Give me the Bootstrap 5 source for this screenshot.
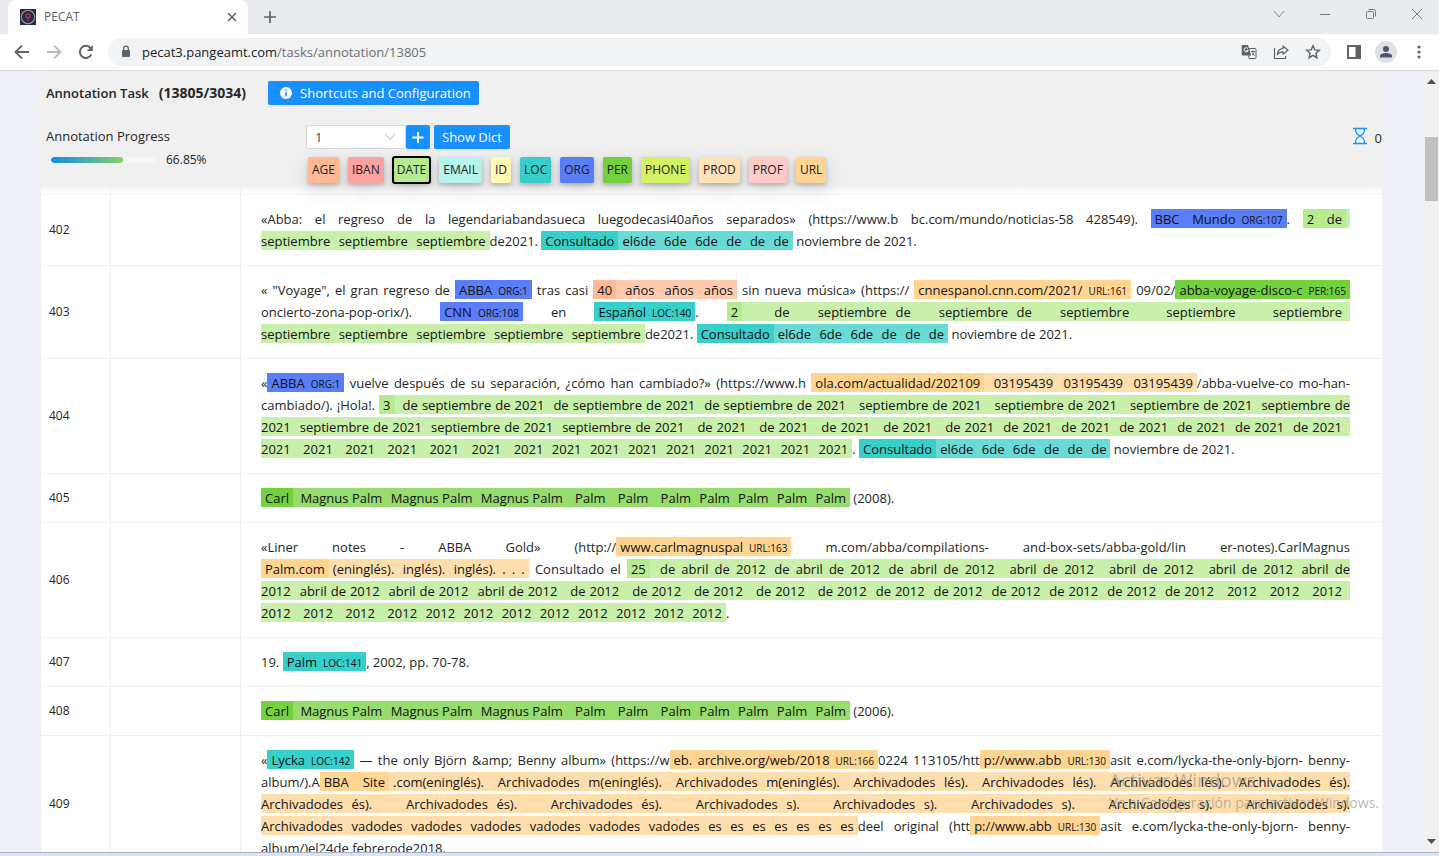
<!DOCTYPE html>
<html lang="es">
<head>
<meta charset="utf-8">
<meta name="viewport" content="width=device-width, initial-scale=1">
<title>PECAT</title>
<link href="https://cdn.jsdelivr.net/npm/bootstrap@5.3.0/dist/css/bootstrap.min.css" rel="stylesheet">
<script src="https://cdn.jsdelivr.net/npm/bootstrap@5.3.0/dist/js/bootstrap.bundle.min.js"></script>
<style>
  body { font: 13px/22px "Open Sans", "Noto Sans", sans-serif; color: #262626; background: #eff1f6; }
  svg { display: block; flex: none; }
  button { font: inherit; }
  .icon-btn { border: 0; background: none; padding: 0; color: #5f6368; }

  /* browser frame */
  .tab-strip { height: 34px; background: #e8eaed; }
  .tab-item { width: 240px; margin-left: 8px; background: #fff; border-radius: 8px 8px 0 0; padding: 0 10px 0 12px; font-size: 12px; color: #5f6368; }
  .window-btns { gap: 34px; padding: 0 16px 6px 0; }
  .tool-row { height: 37px; background: #fff; border-bottom: 1px solid #dadce0; padding: 0 12px 0 14px; }
  .url-pill { height: 28px; border-radius: 14px; background: #f1f3f4; padding: 0 10px 0 12px; margin-left: 14px; }
  .url-text { color: #6b6f73; text-decoration: none; margin-left: 10px; }
  .url-text strong { font-weight: 400; color: #202124; }
  .avatar { width: 22px; height: 22px; background: #dee1e6; margin-left: 14px; }
  .menu-btn { margin-left: 14px; }

  /* page area */
  .page-area { padding: 0 42px 0 41px; }
  .task-head { background: #f0f0f0; box-shadow: 0 0 6px #f0f0f0; padding: 10px 0 3px 5px; z-index: 2; }
  .head-title { font-size: 13px; font-weight: 600; height: 24px; }
  .head-count { font-size: 14px; font-weight: 700; margin: 0 22px 0 10px; }
  .blue-btn { background: #1890ff; border: 0; border-radius: 2px; color: #fff; height: 24px; padding: 0 8px; line-height: 22px; box-shadow: 0 2px 0 #00000008; font-weight: 500; white-space: nowrap; }
  .progress-col { width: 260px; }
  .bar-row { padding-top: 2px; }
  .bar-track { width: 107px; height: 6px; border-radius: 3px; background: #f5f5f5; margin-left: 5px; }
  .bar-track .progress-bar { border-radius: 3px; background: linear-gradient(90deg, #108ee9, #87d068); }
  .pct { font-size: 12px; }
  .dict-select { width: 100px; height: 24px; border: 1px solid #d9d9d9; border-radius: 2px; background: #fff; appearance: none; padding: 0 8px; color: #444; font: inherit; line-height: 20px; }
  .select-chevron { position: absolute; right: 10px; top: 8px; pointer-events: none; }
  .tag-row { padding-left: 2px; gap: 9px; }
  .tag-btn { border: 0; border-radius: 2px; height: 26px; padding: 0 4px; font-size: 12px; line-height: 26px; color: #222; box-shadow: 0 2px 4px #0003, 0 6px 20px #00000024; }
  .tag-btn.active { outline: 2px solid #000; outline-offset: -1px; }
  .timer { padding-top: 2px; }

  /* segments table */
  .seg-table { table-layout: fixed; width: 100%; background: #fff; border-collapse: separate; border-spacing: 0; }
  .seg-table td { padding: 13px 32px 13px 20px; border-bottom: 1px solid #f0f0f0; vertical-align: middle; }
  .seg-table td:nth-child(-n+2) { border-right: 1px solid #f0f0f0; padding: 0 8px; font-size: 12px; font-weight: 500; }
  .seg-table .spacer-row td { height: 9px; padding: 0; background: linear-gradient(#f5f5f5, #fff); }
  .seg-line { display: block; white-space: nowrap; height: 22px; }
  .seg-line.full { text-align: justify; text-align-last: justify; }
  .ent { padding: 1px 4px 0; color: #111; }
  .ent small { font-size: 10px; line-height: 12px; font-weight: 500; margin-left: 6px; }
  .flush { padding-right: 0; }
  .cont { padding-left: 0; }
  .wide-end { padding-right: 8px; }
  .pad-gap { padding-left: 5px; }
  .pad-gap-2 { padding-left: 9px; }
  .fix-gap { padding-left: 2px; }
  .k-age { background: #ffba95; } .k-age-l { background: #ffcbb0; }
  .k-iban { background: #ffa39e; }
  .k-date { background: #b7eb8f; } .k-date-l { background: #c9f0ab; }
  .k-email { background: #b5f5ec; }
  .k-id { background: #fffbb5; }
  .k-loc { background: #36cfc9; } .k-loc-l { background: #68dbd6; }
  .k-org { background: #597ef7; }
  .k-per { background: #73d13d; } .k-per-l { background: #96dd6e; }
  .k-phone { background: #d3f261; }
  .k-prod { background: #ffe2b5; }
  .k-prof { background: #ffccc7; }
  .k-url { background: #ffd591; } .k-url-l { background: #ffdead; }

  .scroll-rail { width: 15px; background: #f1f1f1; }
  .scroll-thumb { width: 13px; height: 64px; background: #c1c1c1; margin-top: 53px; }
  .watermark { position: absolute; right: 60px; bottom: 38px; color: #8c8c8c99; pointer-events: none; z-index: 3; line-height: 24px; white-space: nowrap; }
  .watermark div:first-child { font-size: 19px; }
  .watermark div:last-child { font-size: 14px; line-height: 22px; }
  .task-edge { height: 4px; background: #d9e2f7; border-top: 1px solid #a9b2c0; }
</style>
</head>
<body class="vh-100 d-flex flex-column overflow-hidden">

<header class="flex-shrink-0">
  <div class="tab-strip d-flex">
    <div class="tab-item d-flex align-items-center">
      <svg width="16" height="16" viewBox="0 0 16 16"><rect width="16" height="16" fill="#222a46"/><circle cx="8" cy="8" r="6.7" fill="none" stroke="#a29c9a" stroke-width="1.1"/><circle cx="8" cy="7" r="2" fill="none" stroke="#b5305a" stroke-width="1.5"/><path d="M8 9v3" stroke="#b5305a" stroke-width="1.2"/></svg>
      <span class="ms-2 flex-grow-1">PECAT</span>
      <button class="icon-btn" aria-label="Close tab"><svg width="12" height="12" viewBox="0 0 12 12" stroke="currentColor" stroke-width="1.5"><path d="M2 2l8 8M10 2l-8 8"/></svg></button>
    </div>
    <button class="icon-btn px-3" aria-label="New tab"><svg width="12" height="12" viewBox="0 0 12 12" stroke="currentColor" stroke-width="1.7"><path d="M6 0v12M0 6h12"/></svg></button>
    <div class="window-btns ms-auto d-flex align-items-center">
      <button class="icon-btn" aria-label="Search tabs"><svg width="12" height="12" viewBox="0 0 12 12" fill="none" stroke="#85888c"><path d="M1 3l5 6 5-6"/></svg></button>
      <button class="icon-btn" aria-label="Minimize"><svg width="12" height="12" viewBox="0 0 12 12" stroke="#777a7e"><path d="M1 6.500h10"/></svg></button>
      <button class="icon-btn" aria-label="Restore"><svg width="12" height="12" viewBox="0 0 12 12" fill="none" stroke="#777a7e"><rect x="1.500" y="3.500" width="7" height="7" rx="1"/><path d="M3.500 1.500h5a2 2 0 0 1 2 2v5"/></svg></button>
      <button class="icon-btn" aria-label="Close"><svg width="12" height="12" viewBox="0 0 12 12" stroke="#777a7e"><path d="M1 1l10 10M11 1L1 11"/></svg></button>
    </div>
  </div>
  <div class="tool-row d-flex align-items-center">
    <button class="icon-btn" aria-label="Back"><svg width="16" height="16" viewBox="0 0 16 16" fill="none" stroke="#5f6368" stroke-width="1.8"><path d="M15 8H2M8 1.500L1.500 8 8 14.500"/></svg></button>
    <button class="icon-btn ms-3" aria-label="Forward"><svg width="16" height="16" viewBox="0 0 16 16" fill="none" stroke="#babcbe" stroke-width="1.8"><path d="M1 8h13M8 1.500L14.500 8 8 14.500"/></svg></button>
    <button class="icon-btn ms-3" aria-label="Reload"><svg width="16" height="16" viewBox="0 0 16 16" fill="none" stroke="#5f6368" stroke-width="2"><path d="M13.300 10.500A6 6 0 1 1 12.500 4"/><path d="M14.800 1v6H8.800z" fill="#5f6368" stroke="none"/></svg></button>
    <div class="url-pill d-flex align-items-center flex-grow-1">
      <svg width="12" height="14" viewBox="0 0 12 14"><rect x="2" y="5" width="8" height="7" rx="1" fill="#5f6368"/><path d="M3.700 6V3.500a2.300 2.300 0 0 1 4.600 0V6" fill="none" stroke="#5f6368" stroke-width="1.300"/></svg>
      <a class="url-text flex-grow-1" href="#"><strong>pecat3.pangeamt.com</strong>/tasks/annotation/13805</a>
      <button class="icon-btn" aria-label="Translate"><svg width="16" height="16" viewBox="0 0 16 16"><path d="M7 4.500h7a1 1 0 0 1 1 1v8a1 1 0 0 1-1 1H8z" fill="none" stroke="#5f6368"/><path d="M1.500 1h5.500l3.200 10.500H1.500a.8.8 0 0 1-.8-.8V1.800a.8.8 0 0 1 .8-.8z" fill="#5f6368"/><path d="M7 4.700A2.100 2.100 0 1 0 7.200 6.500H5.300" fill="none" stroke="#fff"/><path d="M10 7.500h4M12 6.500v1M13 7.500c0 2-1.500 3-2 3.300M11 8.500l2.500 3.500" fill="none" stroke="#5f6368" stroke-width=".9"/></svg></button>
      <button class="icon-btn ms-3" aria-label="Share"><svg width="16" height="16" viewBox="0 0 16 16" fill="none" stroke="#5f6368" stroke-width="1.200"><path d="M1.500 4v10.500h11V12"/><path d="M10 2l5 4.200-5 4V7.800c-3 0-4.600 1-5.800 3 .4-3.700 2.400-6 5.800-6.400z" stroke-linejoin="round"/></svg></button>
      <button class="icon-btn ms-3" aria-label="Bookmark"><svg width="16" height="16" viewBox="0 0 16 16" fill="none" stroke="#5f6368" stroke-width="1.400"><path d="M8 1.800l1.800 4.100 4.500.4-3.400 3 1 4.400L8 11.400l-3.900 2.300 1-4.400-3.400-3 4.500-.4z"/></svg></button>
    </div>
    <button class="icon-btn ms-3" aria-label="Side panel"><svg width="14" height="14" viewBox="0 0 14 14"><rect x="1" y="1" width="12" height="12" fill="none" stroke="#5f6368" stroke-width="2"/><rect x="8.500" y="1" width="5" height="12" fill="#5f6368"/></svg></button>
    <button class="icon-btn avatar rounded-circle d-flex align-items-center justify-content-center" aria-label="Profile"><svg width="14" height="14" viewBox="0 0 14 14" fill="#4d5670"><circle cx="7" cy="4" r="3"/><path d="M1 12.500V11c0-2 3-3 6-3s6 1 6 3v1.500z"/></svg></button>
    <button class="icon-btn menu-btn" aria-label="Menu"><svg width="16" height="16" viewBox="0 0 16 16" fill="#5f6368"><circle cx="8" cy="3" r="1.600"/><circle cx="8" cy="8" r="1.600"/><circle cx="8" cy="13" r="1.600"/></svg></button>
  </div>
</header>

<div class="d-flex flex-grow-1 overflow-hidden position-relative">
  <main class="page-area flex-grow-1 overflow-hidden">
    <section class="task-head position-relative">
      <div class="head-title d-flex align-items-center">
        <span>Annotation Task</span><span class="head-count">(13805/3034)</span>
        <button class="blue-btn d-flex align-items-center">
          <svg class="ms-1" width="12" height="12" viewBox="0 0 12 12"><circle cx="6" cy="6" r="6" fill="#fff"/><path d="M6 5v4.200M6 2.600V4" stroke="#1890ff" stroke-width="1.500"/></svg>
          <span class="ms-2">Shortcuts and Configuration</span></button>
      </div>
      <div class="d-flex pt-3 mt-1">
        <div class="progress-col">
          <div>Annotation Progress</div>
          <div class="bar-row d-flex align-items-center">
            <div class="progress bar-track" role="progressbar" aria-label="Annotation Progress" aria-valuenow="66.85" aria-valuemin="0" aria-valuemax="100"><div class="progress-bar" style="width:66.85%"></div></div>
            <span class="pct ms-2">66.85%</span>
          </div>
        </div>
        <div>
          <div class="d-flex">
            <div class="position-relative">
              <select class="dict-select" aria-label="Level"><option>1</option></select>
              <svg class="select-chevron" width="12" height="8" viewBox="0 0 12 8" fill="none" stroke="#bfbfbf"><path d="M1.500 1l4.500 6 4.500-6"/></svg>
            </div>
            <button class="blue-btn px-0 d-flex align-items-center justify-content-center" aria-label="Add"><svg width="24" height="12" viewBox="0 0 24 12" stroke="#fff" stroke-width="1.800"><path d="M12 1v11M6.500 6.500h11"/></svg></button>
            <button class="blue-btn ms-1">Show Dict</button>
          </div>
          <div class="tag-row d-flex mt-2" id="tags"></div>
        </div>
        <div class="timer ms-auto d-flex align-items-start gap-2">
          <svg width="14" height="18" viewBox="0 0 14 18" fill="none" stroke="#1890ff" stroke-width="1.300"><path d="M2.500 1.500c0 4 1 6 4.500 7.500 3.500-1.500 4.500-3.500 4.500-7.500M2.500 16.500c0-4 1-6 4.500-7.500 3.500 1.500 4.500 3.500 4.500 7.500" fill="#e6f7ff"/><path d="M0 1.500h14M0 16.500h14" stroke-width="1.600"/></svg>
          <span>0</span>
        </div>
      </div>
    </section>
    <table class="seg-table">
      <colgroup><col style="width:70px"><col style="width:130px"><col></colgroup>
      <tbody id="segments"></tbody>
    </table>
  </main>
  <div class="scroll-rail d-flex flex-column align-items-center flex-shrink-0 py-1">
    <svg class="mt-1" width="9" height="5" viewBox="0 0 9 5"><path d="M0 5l4.500-5L9 5z" fill="#505050"/></svg>
    <div class="scroll-thumb"></div>
    <svg class="mt-auto" width="9" height="9" viewBox="0 0 9 9"><path d="M0 0l4.500 5L9 0z" fill="#505050"/></svg>
  </div>
  <div class="watermark"><div>Activar Windows</div><div>Ve a Configuración para activar Windows.</div></div>
</div>
<footer class="task-edge flex-shrink-0"></footer>

<script>
const tags = ["AGE", "IBAN", "DATE", "EMAIL", "ID", "LOC", "ORG", "PER", "PHONE", "PROD", "PROF", "URL"];
document.getElementById("tags").innerHTML = tags.map(t =>
  `<button class="tag-btn k-${t.toLowerCase()}${t === "DATE" ? " active" : ""}">${t}</button>`).join("");

/* Segment markup: {kind classes|text|label} is an annotation, "~" and "~~" add the
   padding of nested annotations, "_" is a fixed gap that does not stretch, and a
   line that starts with "=" is justified to the full width of the cell. */
const r = (n, s) => s.repeat(n);
const carl = "{per|Carl}{per-l| Magnus Palm ~Magnus Palm ~Magnus Palm ~~Palm ~~Palm ~~Palm" + r(4, " ~Palm") + "}";
const consulted = "{loc|Consultado}{loc-l|el6de ~6de ~6de ~de ~de ~de} noviembre de 2021.";
const segments = [
  [402, ["=«Abba: el regreso de la legendariabandasueca luegodecasi40años separados» (https://www.b bc.com/mundo/noticias-58 428549). {org|BBC Mundo|ORG:107}. {date|2 de}{date-l flush|}",
         "{date-l cont|septiembre ~septiembre ~septiembre}de2021. " + consulted]],
  [403, ["=« \"Voyage\", el gran regreso de {org|ABBA|ORG:1} tras casi {age|40}{age-l| años ~años ~años} sin nueva música» (https:// {url|cnnespanol.cnn.com/2021/|URL:161} 09/02/{per|abba-voyage-disco-c|PER:165}",
         "=oncierto-zona-pop-orix/). {org|CNN|ORG:108} en {loc|Español|LOC:140}. {date|2}{date-l wide-end| de septiembre_de septiembre_de septiembre ~~septiembre ~~septiembre}",
         "{date-l cont|septiembre" + r(4, " ~septiembre") + "}de2021. " + consulted]],
  [404, ["=«{org|ABBA|ORG:1} vuelve después de su separación, ¿cómo han cambiado?» (https://www.h {url|ola.com/actualidad/202109}{url-l| 03195439 ~03195439 ~03195439}/abba-vuelve-co mo-han-",
         "=cambiado/). ¡Hola!. {date|3}{date-l flush| de septiembre de 2021 ~de septiembre de 2021 ~de septiembre de 2021 ~~septiembre de 2021 ~~septiembre de 2021 ~~septiembre de 2021 ~septiembre de}",
         "={date-l cont wide-end|2021" + r(3, " ~septiembre de 2021") + r(5, " ~~de 2021") + r(6, " ~de 2021") + "}",
         "{date-l cont|2021" + r(6, " ~~2021") + r(8, " ~2021") + "}. " + consulted]],
  [405, [carl + " (2008)."]],
  [406, ["=«Liner notes - ABBA Gold» (http://{url|www.carlmagnuspal|URL:163} m.com/abba/compilations- and-box-sets/abba-gold/lin er-notes).CarlMagnus",
         "={url|Palm.com}{url-l|(eninglés)._inglés)._inglés). . . .} Consultado el {date|25}{date-l flush| de abril de 2012_de abril de 2012_de abril de 2012 ~~abril de 2012 ~~abril de 2012 ~~abril de 2012_abril de}",
         "={date-l cont wide-end|2012" + r(3, " ~abril de 2012") + r(5, " ~~de 2012") + r(6, " ~de 2012") + r(3, " ~~2012") + "}",
         "{date-l cont|2012" + r(3, " ~~2012") + r(8, " ~2012") + "}."]],
  [407, ["19. {loc|Palm|LOC:141}, 2002, pp. 70-78."]],
  [408, [carl + " (2006)."]],
  [409, ["=«{loc|Lycka|LOC:142} — the only Björn &amp;amp; Benny album» (https://w{url|eb. archive.org/web/2018|URL:166}0224 113105/htt{url|p://www.abb|URL:130}asit e.com/lycka-the-only-bjorn- benny-",
         "=album/).A{url|BBA Site}{url-l flush|.com(eninglés). Archivadodes_m(eninglés). Archivadodes_m(eninglés). Archivadodes_lés). Archivadodes_lés). Archivadodes_lés). Archivadodes_és).}",
         "={url-l cont flush|Archivadodes_és)." + r(2, " Archivadodes_és).") + r(5, " Archivadodes_s).") + "}",
         "={url-l cont|Archivadodes" + r(6, "_vadodes") + r(7, "_es") + "}deel original (htt{url|p://www.abb|URL:130}asit e.com/lycka-the-only-bjorn- benny-",
         "album/)el24de febrerode2018."]]
];
const render = line => {
  const full = line[0] === "=";
  const html = (full ? line.slice(1) : line)
    .replace(/\{([^|]+)\|([^|}]*)(?:\|([^}]*))?\}/g, (m, kind, text, label) =>
      `<span class="ent k-${kind}">${text}${label ? `<small>${label}</small>` : ""}</span>`)
    .replace(/~~/g, '<span class="pad-gap-2"></span>')
    .replace(/~/g, '<span class="pad-gap"></span>')
    .replace(/_/g, '<span class="fix-gap">\u2002</span>');
  return `<span class="seg-line${full ? " full" : ""}">${html}</span>`;
};
document.getElementById("segments").innerHTML =
  '<tr class="spacer-row"><td></td><td></td><td></td></tr>' +
  segments.map(([id, lines]) => `<tr><td>${id}</td><td></td><td>${lines.map(render).join("")}</td></tr>`).join("");
</script>
</body>
</html>
